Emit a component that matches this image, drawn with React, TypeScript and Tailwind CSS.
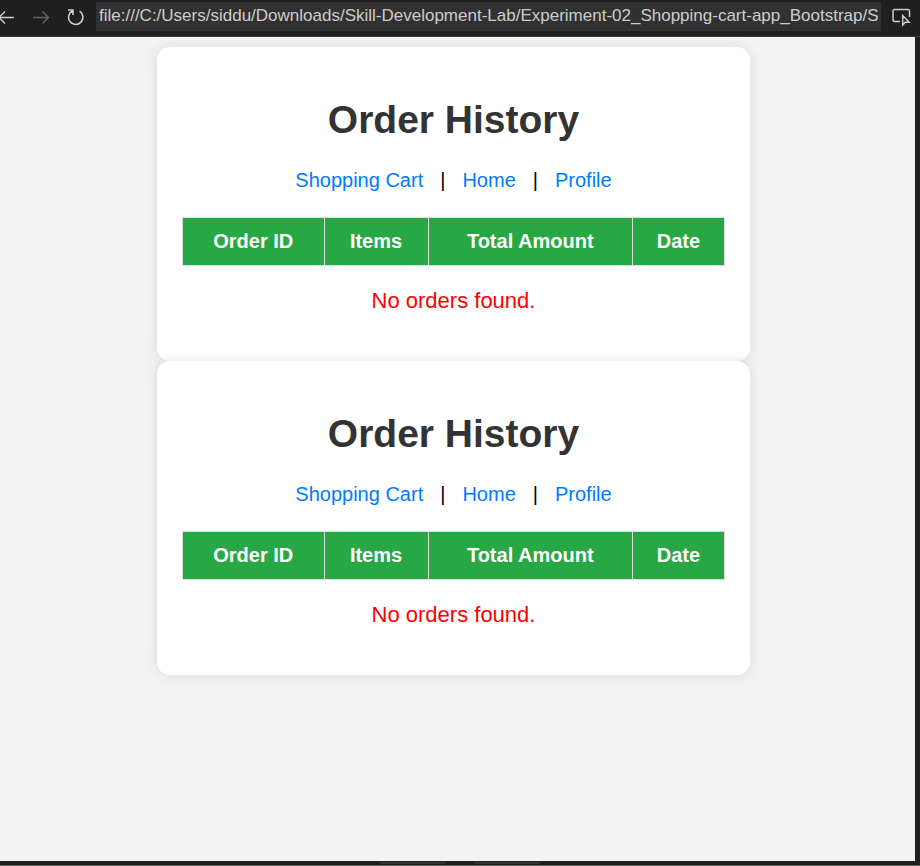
const ORDER_COLUMNS = ['Order ID', 'Items', 'Total Amount', 'Date'];

const ADDRESS =
  'file:///C:/Users/siddu/Downloads/Skill-Development-Lab/Experiment-02_Shopping-cart-app_Bootstrap/Sho';

function Toolbar() {
  return (
    <header className="flex h-[37px] items-start border-b border-[#3a3a3a] bg-[#1f1f1f] pt-[2px] text-[#cccccc]">
      <button type="button" aria-label="Back" className="h-7 w-6 shrink-0">
        <svg width="24" height="28" viewBox="0 0 24 28" fill="none" stroke="currentColor" strokeWidth="1.4">
          <path d="M14 15.5H-1M5 9.5l-6 6 6 6" />
        </svg>
      </button>
      <button type="button" aria-label="Forward" className="h-7 w-9 shrink-0 text-[#666666]">
        <svg width="36" height="28" viewBox="24 0 36 28" fill="none" stroke="currentColor" strokeWidth="1.4">
          <path d="M33 15.5h15.5M42.5 9.5l6 6-6 6" />
        </svg>
      </button>
      <button type="button" aria-label="Reload" className="h-7 w-9 shrink-0">
        <svg width="36" height="28" viewBox="60 0 36 28" fill="none" stroke="currentColor" strokeWidth="1.6">
          <path d="M68 8h5v5M72.500 8.800A7.200 7.200 0 1 0 79.600 9.200" />
        </svg>
      </button>
      <input
        type="text"
        aria-label="Address"
        defaultValue={ADDRESS}
        className="h-[29px] min-w-0 flex-1 bg-[#313131] pr-[3px] pb-[2px] pl-[3px] text-[17px] leading-5 text-[#cccccc] outline-none"
      />
      <button type="button" aria-label="Select element" className="h-7 w-[39px] shrink-0">
        <svg width="39" height="28" viewBox="881 2 39 28" fill="none" stroke="currentColor" strokeWidth="1.5">
          <path d="M900 21.500h-5.500a1.500 1.500 0 0 1-1.500-1.500v-9a1.500 1.500 0 0 1 1.500-1.500h13.500a1.500 1.500 0 0 1 1.500 1.500v6M902.700 15.500v9.500l2.500-2.800h4z" />
        </svg>
      </button>
    </header>
  );
}

function OrderHistoryCard() {
  return (
    <section className="w-full max-w-[593px] rounded-[13px] bg-white px-[25px] pt-[50px] pb-[47px] text-center shadow-[0_0_13px_rgba(0,0,0,0.1)]">
      <h1 className="text-[39px] leading-[45px] font-bold text-[#333333]">Order History</h1>
      <nav className="mt-[26px] flex justify-center gap-[17px] text-[20px] leading-6 text-black">
        <a href="#cart" className="text-[#007bff]">Shopping Cart</a>
        <span>|</span>
        <a href="#home" className="text-[#007bff]">Home</a>
        <span>|</span>
        <a href="#profile" className="text-[#007bff]">Profile</a>
      </nav>
      <table className="mt-[25px] w-full border-collapse text-[20px] leading-6">
        <thead>
          <tr>
            {ORDER_COLUMNS.map((column) => (
              <th
                key={column}
                scope="col"
                className="border border-[#dddddd] bg-[#28a745] px-3 pt-[11px] pb-3 font-bold text-white"
              >
                {column}
              </th>
            ))}
          </tr>
        </thead>
      </table>
      <p className="mt-[22px] text-[22px] leading-[26px] text-[#ff0000]">No orders found.</p>
    </section>
  );
}

export default function App() {
  return (
    <div className="flex min-h-screen flex-col bg-[#1f1f1f] font-['Liberation_Sans',Arial,sans-serif]">
      <Toolbar />
      <main className="mr-[5px] flex flex-1 flex-col items-center bg-[#f3f3f3] pt-[10px] pr-2">
        <OrderHistoryCard />
        <OrderHistoryCard />
      </main>
      <footer className="flex h-[5px] gap-[30px] border-b border-[#1177bb] pt-px pl-[380px]">
        <div className="h-[2px] w-[65px] bg-[#313131]" />
        <div className="h-[2px] w-[65px] bg-[#313131]" />
      </footer>
    </div>
  );
}
